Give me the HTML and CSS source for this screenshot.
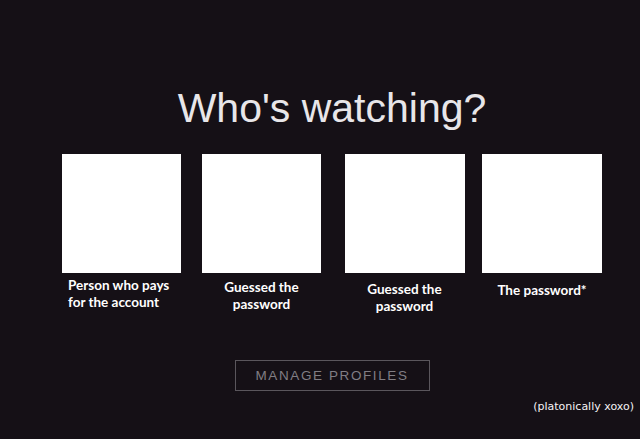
FILE: index.html
```html
<!DOCTYPE html>
<html>
<head>
<meta charset="utf-8">
<link rel="stylesheet" href="styles.css">
</head>
<body>
<main class="page">
  <h1 class="title">Who's watching?</h1>
  <div class="profiles">
    <div class="profile">
      <div class="avatar"></div>
      <div class="label label-left">Person who pays<br>for the account</div>
    </div>
    <div class="profile">
      <div class="avatar"></div>
      <div class="label label-2">Guessed the<br>password</div>
    </div>
    <div class="profile profile-3">
      <div class="avatar avatar-wide"></div>
      <div class="label label-3">Guessed the<br>password</div>
    </div>
    <div class="profile profile-4">
      <div class="avatar"></div>
      <div class="label label-4">The password*</div>
    </div>
  </div>
  <div class="actions">
    <button class="manage">MANAGE PROFILES</button>
  </div>
  <p class="note">(platonically xoxo)</p>
</main>
</body>
</html>
```

FILE: styles.css
```css
html, body {
  margin: 0;
  padding: 0;
  background: #151016;
  height: 100%;
  overflow: hidden;
}

.page {
  width: 540px;
  margin-left: 62px;
  padding-top: 84px;
  font-family: "Liberation Sans", Arial, sans-serif;
}

.title {
  margin: 0;
  font-weight: normal;
  font-size: 41px;
  line-height: 48px;
  color: #e8e6e9;
  text-align: center;
}

.profiles {
  display: flex;
  margin-top: 22px;
}

.profile {
  width: 119px;
  display: flex;
  flex-direction: column;
  margin-right: 21px;
}

.profile-3 {
  margin-left: 3px;
  margin-right: 18px;
}

.profile-4 {
  width: 120px;
  margin-right: 0;
}

.avatar {
  width: 100%;
  height: 119px;
  background: #ffffff;
}

.avatar-wide {
  width: 120px;
}

.label {
  font-family: Lato, "Open Sans", sans-serif;
  font-weight: bold;
  font-size: 13.5px;
  line-height: 17px;
  color: #ffffff;
  text-align: center;
  margin-top: 4px;
}

.label-left {
  text-align: left;
  padding-left: 6px;
}

.label-2 { margin-top: 6px; }
.label-3 { margin-top: 8px; }
.label-4 { margin-top: 9px; }

.actions {
  display: flex;
  justify-content: center;
  margin-top: 45px;
}

.manage {
  width: 195px;
  height: 31px;
  margin-left: 0;
  background: transparent;
  border: 1px solid #5a565c;
  color: #817e84;
  font-family: "Liberation Sans", Arial, sans-serif;
  font-size: 13.5px;
  letter-spacing: 1.6px;
  padding: 0;
}

.note {
  margin: 9px -32px 0 0;
  text-align: right;
  font-family: "DejaVu Sans", sans-serif;
  font-size: 11px;
  color: #f4f2f4;
}
```
